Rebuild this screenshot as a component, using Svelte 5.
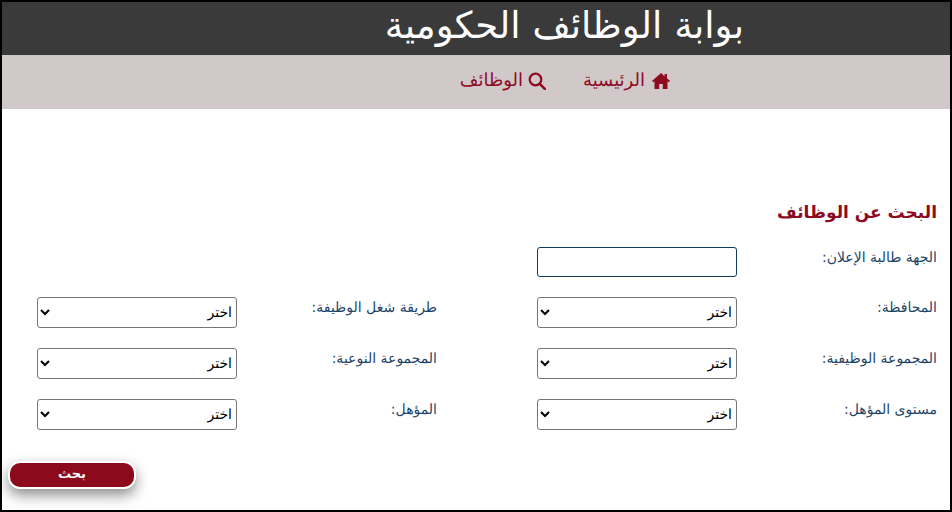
<script>
  const rows = [
    [{ label: 'الجهة طالبة الإعلان:', input: true }, null],
    [{ label: 'المحافظة:' }, { label: 'طريقة شغل الوظيفة:' }],
    [{ label: 'المجموعة الوظيفية:' }, { label: 'المجموعة النوعية:' }],
    [{ label: 'مستوى المؤهل:' }, { label: 'المؤهل:' }]
  ];
</script>

<div class="page" dir="rtl">
  <header class="banner">
    <h1>بوابة الوظائف الحكومية</h1>
  </header>
  <nav class="nav">
    <a href="#home">
      <svg viewBox="0 0 18 16" width="18" height="16" aria-hidden="true"><path d="M9 0 0 8l1.200 1.300L2.500 8.200V16h4.700v-5h3.600v5h4.700V8.200l1.300 1.100L18 8l-3-2.700V1h-2.400v2.200z" /></svg>
      <span>الرئيسية</span>
    </a>
    <a href="#jobs" class="jobs">
      <svg viewBox="0 0 18 18" width="18" height="18" aria-hidden="true"><circle cx="7.500" cy="7.500" r="5.800" fill="none" stroke="currentColor" stroke-width="2.200" /><path d="m11.800 11.800 5 5" fill="none" stroke="currentColor" stroke-width="2.600" stroke-linecap="round" /></svg>
      <span>الوظائف</span>
    </a>
  </nav>
  <main class="main">
    <h2>البحث عن الوظائف</h2>
    <div class="form">
      {#each rows as row}
        {#each row as field}
          {#if field}
            <div class="field">
              <label for={field.label}>{field.label}</label>
              {#if field.input}
                <input id={field.label} type="text" />
              {:else}
                <select id={field.label}><option>اختر</option></select>
              {/if}
            </div>
          {:else}
            <div></div>
          {/if}
        {/each}
      {/each}
    </div>
    <div class="actions"><button type="button">بحث</button></div>
  </main>
</div>

<style>
  :global(body) { margin: 0; background: #fff; }
  .page {
    box-sizing: border-box;
    width: 952px;
    height: 512px;
    border: 2px solid #000;
    font-family: "DejaVu Sans", sans-serif;
    text-rendering: geometricPrecision;
    overflow: hidden;
    display: flex;
    flex-direction: column;
  }
  .banner {
    height: 53px;
    background: #3a3a3a;
    flex: none;
    padding-right: 206px;
    overflow: hidden;
  }
  h1 {
    margin: 0;
    color: #fff;
    font-size: 37px;
    font-weight: 400;
    line-height: 48px;
  }
  .nav {
    box-sizing: border-box;
    height: 54px;
    flex: none;
    background: #d0c8c9;
    display: flex;
    align-items: center;
    gap: 37px;
    padding: 0 280px 3px 0;
  }
  .nav a {
    display: flex;
    align-items: center;
    gap: 7px;
    color: #8e0a1f;
    font-size: 18px;
    text-decoration: none;
  }
  .nav a.jobs { gap: 5px; }
  .nav svg { fill: currentColor; display: block; flex: none; }
  .main {
    flex: 1;
    padding: 92px 13px 0 35px;
  }
  h2 {
    margin: 0 0 22px;
    color: #8e0a1f;
    font-size: 17px;
    font-weight: 700;
    line-height: 24px;
  }
  .form {
    display: grid;
    grid-template-columns: 400px 400px;
    column-gap: 100px;
    row-gap: 20px;
  }
  .field {
    display: grid;
    grid-template-columns: 200px 200px;
    height: 31px;
  }
  .field:first-child { height: 30px; }
  label {
    color: #1d4468;
    font-size: 14px;
    line-height: 20px;
    padding-top: 1px;
  }
  input, select {
    box-sizing: border-box;
    width: 200px;
    height: 31px;
    margin: 0;
    border-radius: 3px;
    background: #fff;
    font-family: "DejaVu Sans", sans-serif;
    font-size: 14px;
    color: #000;
    text-rendering: geometricPrecision;
  }
  input { border: 1px solid #123a5c; height: 30px; }
  select { border: 1px solid #767676; padding: 0; }
  .actions { display: flex; justify-content: flex-end; margin: 31px 0 0 -29px; }
  button {
    display: block;
    box-sizing: border-box;
    width: 128px;
    height: 28px;
    border: 2px solid #fff;
    border-radius: 12px;
    background: #8c0a1c;
    color: #fff;
    font-family: "DejaVu Sans", sans-serif;
    font-size: 13px;
    font-weight: 700;
    box-shadow: 0 6px 14px rgba(0, 0, 0, .45);
    padding: 0 0 2px;
    text-rendering: geometricPrecision;
  }
</style>
